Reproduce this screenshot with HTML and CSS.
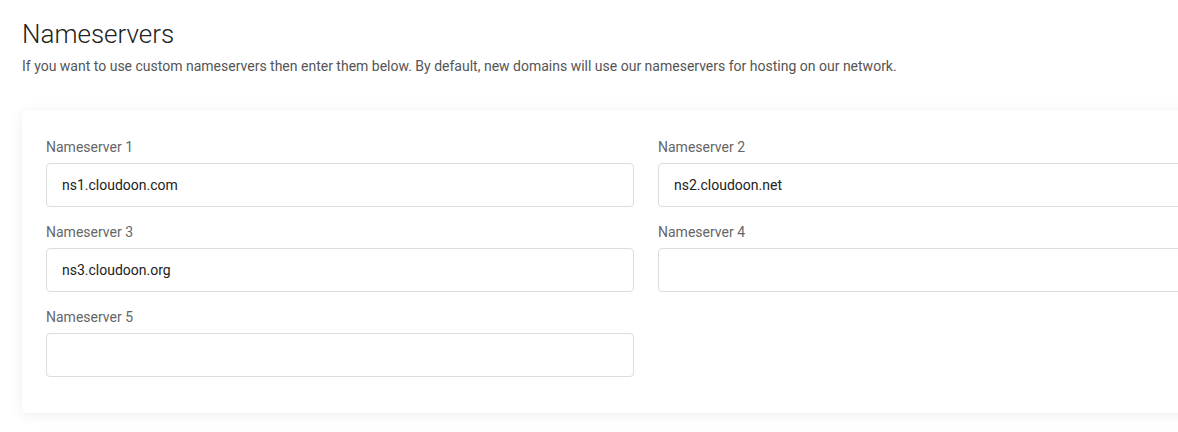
FILE: index.html
```html
<!DOCTYPE html>
<html lang="en">
<head>
    <meta charset="UTF-8">
    <meta name="viewport" content="width=device-width, initial-scale=1.0">
    <title>Nameservers</title>
    <link rel="stylesheet" href="styles.css">
</head>
<body>
    <div class="page">
        <h1 class="page-title">Nameservers</h1>
        <p class="page-desc">If you want to use custom nameservers then enter them below. By default, new domains will use our nameservers for hosting on our network.</p>

        <form class="ns-card" id="nsForm">
            <div class="ns-grid">
                <div class="field">
                    <label for="ns1">Nameserver 1</label>
                    <input type="text" id="ns1" name="ns1" value="ns1.cloudoon.com">
                </div>
                <div class="field">
                    <label for="ns2">Nameserver 2</label>
                    <input type="text" id="ns2" name="ns2" value="ns2.cloudoon.net">
                </div>
                <div class="field">
                    <label for="ns3">Nameserver 3</label>
                    <input type="text" id="ns3" name="ns3" value="ns3.cloudoon.org">
                </div>
                <div class="field">
                    <label for="ns4">Nameserver 4</label>
                    <input type="text" id="ns4" name="ns4">
                </div>
                <div class="field">
                    <label for="ns5">Nameserver 5</label>
                    <input type="text" id="ns5" name="ns5">
                </div>
            </div>
        </form>
    </div>
</body>
</html>
```

FILE: styles.css
```css
html, body {
    overflow: hidden;
}
body {
    font-family: Roboto, 'Liberation Sans', sans-serif;
    background-color: #fff;
    color: #222;
    margin: 0;
}
.page {
    padding: 19px 22px;
}
.page-title {
    font-size: 26px;
    font-weight: 300;
    line-height: 31px;
    color: #222;
    margin: 0 0 6px;
}
.page-desc {
    font-size: 14px;
    line-height: 20px;
    color: #555;
    margin: 0 0 34px;
}
.ns-card {
    width: 1200px;
    background-color: #fff;
    border-radius: 6px;
    box-shadow: 0 2px 14px rgba(0, 0, 0, 0.07);
    padding: 27px 24px 21px;
}
.ns-grid {
    display: grid;
    grid-template-columns: 588px 588px;
    column-gap: 24px;
}
.field {
    display: flex;
    flex-direction: column;
    margin-bottom: 15px;
}
.field label {
    font-size: 14px;
    line-height: 20px;
    color: #666;
    margin-bottom: 6px;
}
.field input {
    height: 44px;
    box-sizing: border-box;
    padding: 0 15px;
    border: 1px solid #ddd;
    border-radius: 4px;
    font-family: Roboto, 'Liberation Sans', sans-serif;
    font-size: 14px;
    color: #222;
    background-color: #fff;
}
.field input:focus {
    border-color: #aaa;
    outline: none;
}
```
